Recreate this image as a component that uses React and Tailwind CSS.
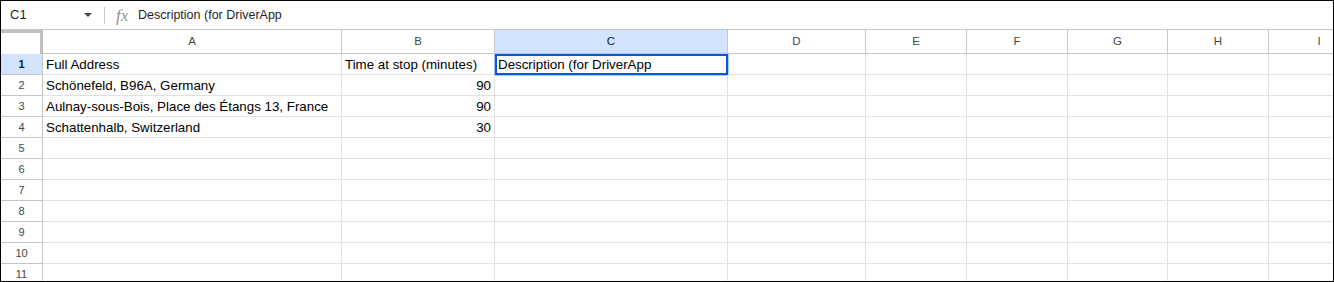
import React from 'react'

const cols = [
  { key: 'A', w: 'w-[299px]' },
  { key: 'B', w: 'w-[153px]' },
  { key: 'C', w: 'w-[233px]' },
  { key: 'D', w: 'w-[138px]' },
  { key: 'E', w: 'w-[101px]' },
  { key: 'F', w: 'w-[101px]' },
  { key: 'G', w: 'w-[100px]' },
  { key: 'H', w: 'w-[101px]' },
  { key: 'I', w: 'w-[101px]' },
]

const rows = [
  ['Full Address', 'Time at stop (minutes)', 'Description (for DriverApp'],
  ['Schönefeld, B96A, Germany', '90', ''],
  ['Aulnay-sous-Bois, Place des Étangs 13, France', '90', ''],
  ['Schattenhalb, Switzerland', '30', ''],
  ['', '', ''],
  ['', '', ''],
  ['', '', ''],
  ['', '', ''],
  ['', '', ''],
  ['', '', ''],
  ['', '', ''],
]

const FormulaBar = () => (
  <div className="flex h-[29px] shrink-0 items-center border-b border-[#c4c7c5]">
    <div className="flex w-[103px] items-center pl-[9px] pr-[12px]">
      <span className="flex-1 text-[13px] text-[#1f1f1f]">C1</span>
      <svg width="8" height="4" viewBox="0 0 8 4">
        <polygon points="0,0 8,0 4,4" fill="#444746" />
      </svg>
    </div>
    <div className="h-[17px] w-px bg-[#c4c7c5]" />
    <span className="ml-[11px] w-[22px] font-['Liberation_Serif'] text-[17px] italic leading-none text-[#8f9396]">fx</span>
    <span className="text-[12.5px] text-[#1f1f1f]">Description (for DriverApp</span>
  </div>
)

const HeaderRow = () => (
  <div className="flex h-[24px] shrink-0">
    <div className="w-[42px] shrink-0 border-r-[3px] border-t-[3px] border-[#c0c0c0] bg-white" />
    {cols.map((c) => (
      <div
        key={c.key}
        className={`${c.w} flex shrink-0 items-center justify-center border-b border-r border-[#c4c7c5] text-[11.5px] ${
          c.key === 'C' ? 'bg-[#d3e3fd] text-[#041e49]' : 'bg-white text-[#444746]'
        }`}
      >
        {c.key}
      </div>
    ))}
  </div>
)

const Row = ({ n, cells }) => (
  <div className="flex h-[21px] shrink-0">
    <div
      className={`flex w-[42px] shrink-0 items-center justify-center border-b border-r border-[#c4c7c5] text-[11px] ${
        n === 1 ? 'bg-[#d3e3fd] font-bold text-[#041e49]' : 'bg-white text-[#444746]'
      }`}
    >
      {n}
    </div>
    {cols.map((c, i) => {
      const v = cells[i] || ''
      const num = v !== '' && !isNaN(Number(v))
      const selected = n === 1 && c.key === 'C'
      return (
        <div
          key={c.key}
          className={`${c.w} relative flex shrink-0 items-center overflow-visible whitespace-nowrap border-b border-r border-[#e1e1e1] px-[3px] pt-[1px] text-[13.33px] text-black ${
            num ? 'justify-end' : ''
          }`}
        >
          {v}
          {selected && (
            <div className="absolute -left-px -top-px h-[23px] w-[235px] rounded-[1px] border border-[#a8c7fa]">
              <div className="h-full w-full border-2 border-[#0b57d0]" />
            </div>
          )}
        </div>
      )
    })}
  </div>
)

export default function App() {
  return (
    <div className="flex h-[282px] w-[1334px] flex-col overflow-hidden border border-black bg-white font-['Liberation_Sans',Arial,sans-serif]">
      <FormulaBar />
      <HeaderRow />
      {rows.map((r, i) => (
        <Row key={i} n={i + 1} cells={r} />
      ))}
    </div>
  )
}
